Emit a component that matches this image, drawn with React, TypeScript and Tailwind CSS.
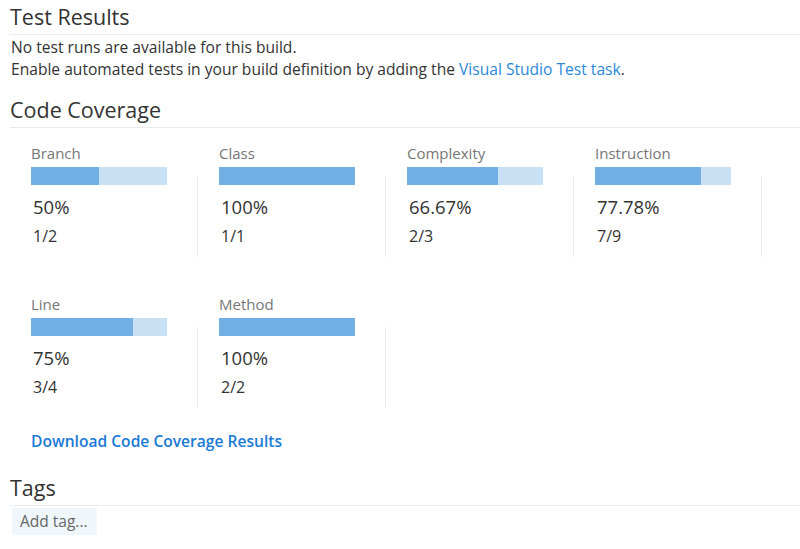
import React from "react";

type Metric = { label: string; pct: string; frac: string; value: number };

const row1: Metric[] = [
  { label: "Branch", pct: "50%", frac: "1/2", value: 0.5 },
  { label: "Class", pct: "100%", frac: "1/1", value: 1 },
  { label: "Complexity", pct: "66.67%", frac: "2/3", value: 2 / 3 },
  { label: "Instruction", pct: "77.78%", frac: "7/9", value: 7 / 9 },
];
const row2: Metric[] = [
  { label: "Line", pct: "75%", frac: "3/4", value: 0.75 },
  { label: "Method", pct: "100%", frac: "2/2", value: 1 },
];

function Card({ m }: { m: Metric }) {
  return (
    <div className="flex h-[114px] w-[188px]">
      <div className="w-[166px]">
        <div className="text-[15px] leading-[20px] text-[#767676]">{m.label}</div>
        <div className="mt-[4px] flex h-[18px] w-[136px] bg-[#c7e0f4]">
          <div className="h-full bg-[#71afe5]" style={{ width: `${m.value * 100}%` }} />
        </div>
        <div className="mt-[10px] pl-[2px] text-[18.5px] leading-[24px] text-[#333333]">{m.pct}</div>
        <div className="mt-[7px] pl-[2px] text-[16px] leading-[20px] text-[#333333]">{m.frac}</div>
      </div>
      <div className="mt-[33px] w-px bg-[#ececec]" />
    </div>
  );
}

export default function App() {
  return (
    <div className="min-h-[549px] bg-white pl-[10px] font-['Open_Sans','Noto_Sans',sans-serif] text-[#333333]">
      <h2 className="h-[35px] border-b border-[#eaeaea] text-[21.5px] leading-[34px]">Test Results</h2>
      <div className="mt-[1px] pl-[1px] text-[15.6px] leading-[22px]">
        <div>No test runs are available for this build.</div>
        <div>
          Enable automated tests in your build definition by adding the{" "}
          <span className="text-[#2b88d8]">Visual Studio Test task</span>.
        </div>
      </div>
      <h2 className="mt-[13px] h-[35px] border-b border-[#eaeaea] text-[21.5px] leading-[34px]">Code Coverage</h2>
      <div className="pl-[21px] pt-[15px]">
        <div className="flex">
          {row1.map((m) => (
            <Card key={m.label} m={m} />
          ))}
        </div>
        <div className="mt-[37px] flex">
          {row2.map((m) => (
            <Card key={m.label} m={m} />
          ))}
        </div>
        <div className="mt-[23px] text-[15.6px] font-semibold leading-[20px] text-[#1a7ad4]">
          Download Code Coverage Results
        </div>
      </div>
      <h2 className="mt-[20px] h-[35px] border-b border-[#eaeaea] text-[21.5px] leading-[34px]">Tags</h2>
      <div className="mt-[2px] ml-[2px] flex h-[27px] w-[85px] items-center bg-[#eff6fc] pl-[8px] text-[15.5px] text-[#666666]">
        Add tag...
      </div>
    </div>
  );
}
